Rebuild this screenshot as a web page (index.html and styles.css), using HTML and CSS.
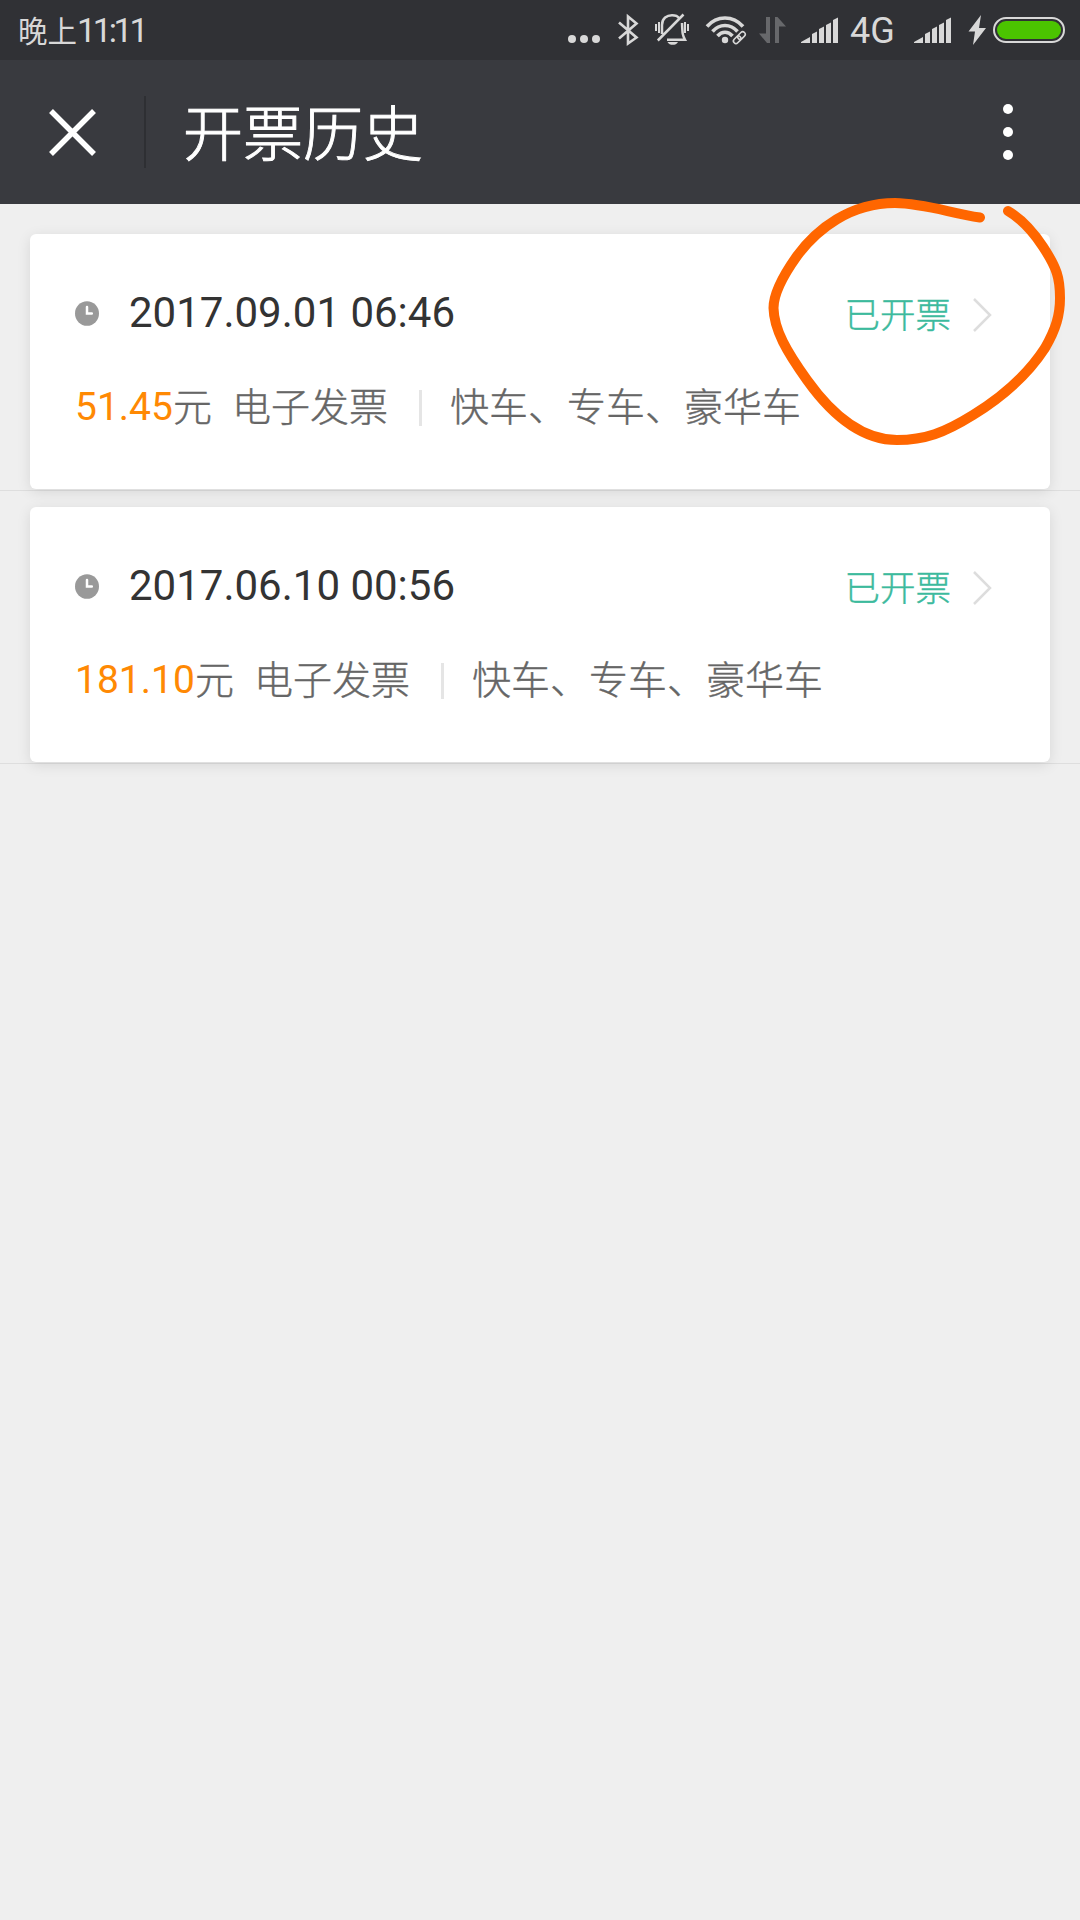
FILE: index.html
```html
<!DOCTYPE html>
<html lang="zh-CN">
<head>
<meta charset="utf-8">
<title>开票历史</title>
<link rel="stylesheet" href="styles.css">
</head>
<body>
<div class="screen">
  <header class="status-bar">
    <div class="clock">晚上<span class="clock-digits">11:11</span></div>
    <div class="status-icons">
      <svg class="i-more" width="32" height="60" viewBox="568 0 32 60"><circle cx="572" cy="39" r="4"/><circle cx="584" cy="39" r="4"/><circle cx="596" cy="39" r="4"/></svg>
      <svg class="i-bluetooth line" width="22" height="60" viewBox="617 0 22 60"><path d="M619 22.500 L636.500 37.500 L628 43.500 V16.500 L636.500 23.500 L619 38.500" stroke-width="2.600"/></svg>
      <svg class="i-bell line" width="36" height="60" viewBox="654 0 36 60"><path d="M662 34 V25 C662 18 667 15.200 672 15.200 C676 15.200 678 16.500 679 18 M682 23 C682.500 34 682.500 35 685 39.800 H667 M657.800 40.500 L683.500 14.500" stroke-width="2.500"/><path d="M656 24 V31 M659 22 V33 M685 22 V33 M688 24 V31" stroke-width="2"/><path class="solid" d="M667.500 42 H678 C676 45.800 669.500 45.800 667.500 42Z"/></svg>
      <svg class="i-wifi line" width="42" height="60" viewBox="705 0 42 60"><path d="M707 26.500 C717 15.200 733 15.200 743 26.500 M712.500 31.500 C719.500 23.500 730.500 23.500 737.500 31.500 M717.500 36 C722 31 728 31 732.500 36" stroke-width="3.600"/><circle class="solid" cx="725" cy="40" r="3.200"/><g transform="rotate(-45 739.500 37.500)" stroke-width="1.600"><rect x="732" y="35" width="8.500" height="5" rx="2.500"/><rect x="738" y="35" width="8.500" height="5" rx="2.500"/></g></svg>
      <svg class="i-data" width="27" height="60" viewBox="759 0 27 60"><path d="M766 17 H770 V43 H767 L759 33.500 H766Z M775 17 H777.500 L786 26.500 H779 V43 H775Z"/></svg>
      <svg class="i-signal" width="37" height="60" viewBox="801 0 37 60"><path d="M801 43 V42 L810 37 V43Z M812 43 V34 L817 31.500 V43Z M819 43 V29 L824 26.500 V43Z M826 43 V25 L831 22.500 V43Z M833 43 V20 L838 17.500 V43Z"/></svg>
      <span class="network">4G</span>
      <svg class="i-signal-b" width="37" height="60" viewBox="801 0 37 60"><path d="M801 43 V42 L810 37 V43Z M812 43 V34 L817 31.500 V43Z M819 43 V29 L824 26.500 V43Z M826 43 V25 L831 22.500 V43Z M833 43 V20 L838 17.500 V43Z"/></svg>
      <svg class="i-bolt" width="18" height="60" viewBox="968 0 18 60"><path d="M981 15 L968.500 31.500 H975 L973 45 L986 28 H979Z"/></svg>
      <svg class="i-battery" width="72" height="60" viewBox="993 0 72 60"><rect class="shell" x="994" y="18" width="70" height="24" rx="12"/><rect class="charge" x="997" y="21" width="64" height="18" rx="9"/></svg>
    </div>
  </header>

  <nav class="title-bar">
    <svg class="close" width="48" height="48" viewBox="0 0 48 48"><path d="M2 3 L45 46 M45 3 L2 46"/></svg>
    <span class="title-divider"></span>
    <h1 class="title">开票历史</h1>
    <svg class="menu" width="10" height="56" viewBox="0 0 10 56"><circle cx="5" cy="5" r="5"/><circle cx="5" cy="28" r="5"/><circle cx="5" cy="51" r="5"/></svg>
  </nav>

  <main class="list">
    <div class="item">
      <section class="card">
        <div class="row row-top">
          <svg class="time-icon" width="24" height="25" viewBox="0 0 24 25"><ellipse cx="12" cy="12.500" rx="12" ry="12.300"/><path d="M12 6 V12.500 H16.800"/></svg>
          <time class="date">2017.09.01 06:46</time>
          <span class="state">已开票</span>
          <svg class="chevron" width="20" height="34" viewBox="0 0 20 34"><path d="M1 1 L17 17 L1 33"/></svg>
        </div>
        <div class="row row-detail">
          <span class="amount">51.45</span><span class="unit">元</span>
          <span class="kind">电子发票</span>
          <span class="separator"></span>
          <span class="services">快车、专车、豪华车</span>
        </div>
      </section>
    </div>
    <div class="item">
      <section class="card">
        <div class="row row-top">
          <svg class="time-icon" width="24" height="25" viewBox="0 0 24 25"><ellipse cx="12" cy="12.500" rx="12" ry="12.300"/><path d="M12 6 V12.500 H16.800"/></svg>
          <time class="date">2017.06.10 00:56</time>
          <span class="state">已开票</span>
          <svg class="chevron" width="20" height="34" viewBox="0 0 20 34"><path d="M1 1 L17 17 L1 33"/></svg>
        </div>
        <div class="row row-detail">
          <span class="amount">181.10</span><span class="unit">元</span>
          <span class="kind">电子发票</span>
          <span class="separator"></span>
          <span class="services">快车、专车、豪华车</span>
        </div>
      </section>
    </div>
  </main>

  <svg class="highlight" width="310" height="260" viewBox="760 190 310 260"><path d="M980 217.500 C950 213 925 203.500 895 203 C850 203 817 229 797 256 C782 277 773.500 295 773.500 308 C774 330 787 352 807 380 C832 415 862 440 897 440 C925 440 944 433 973 415 C1012 391 1032 368 1045 348 C1056 329 1060 315 1060 298 C1060 278 1057 268 1043 246.700 C1030 227 1020 218 1008 211"/></svg>
</div>
</body>
</html>
```
FILE: styles.css
```css
* { box-sizing: border-box; }

body {
  margin: 0;
  background: #efefef;
  font-family: Roboto, "Noto Sans CJK SC", sans-serif;
}

svg { display: block; flex: none; }

.screen {
  position: relative;
  width: 1080px;
  height: 1920px;
  overflow: hidden;
  background: #efefef;
}

/* System status bar */
.status-bar {
  display: flex;
  justify-content: space-between;
  height: 60px;
  padding: 0 15px 0 18px;
  background: #303135;
  color: #d8d8d8;
}

.clock {
  font-size: 29.5px;
  line-height: 60px;
  white-space: nowrap;
}

.clock-digits {
  font-size: 34px;
  letter-spacing: -3.3px;
}

.status-icons {
  display: flex;
  fill: #d8d8d8;
}

.line { fill: none; stroke: #d8d8d8; }
.solid { fill: #d8d8d8; stroke: none; }
.i-bluetooth { margin-left: 17px; }
.i-bell { margin-left: 15px; }
.i-wifi { margin-left: 15px; }
.i-data { margin-left: 12px; fill: #67686b; }
.i-signal { margin-left: 15px; }

.network {
  width: 46px;
  margin-left: 12px;
  font-size: 36px;
  line-height: 62px;
}

.i-signal-b { margin-left: 18px; }
.i-bolt { margin-left: 17px; }
.i-battery { margin-left: 7px; }
.shell { fill: none; stroke: #d8d8d8; stroke-width: 2; }
.charge { fill: #4bc400; }

/* Page title bar */
.title-bar {
  display: flex;
  align-items: center;
  height: 144px;
  padding: 0 67px 0 49px;
  background: #393a3f;
}

.close {
  fill: none;
  stroke: #fff;
  stroke-width: 5.5;
}

.title-divider {
  width: 2px;
  height: 72px;
  margin-left: 47px;
  background: #2e2f33;
}

.title {
  flex: 1;
  margin: 0 0 0 37px;
  padding-top: 8px;
  color: #fff;
  font-size: 60px;
  font-weight: 300;
  line-height: 84px;
  -webkit-text-stroke: 0.9px #fff;
}

.menu { fill: #fff; }

/* Invoice list */
.list { padding-top: 14px; }

.item {
  padding: 16px 30px 1px;
  border-bottom: 1px solid #dedede;
}

.card {
  height: 255px;
  padding: 47px 57px 0 45px;
  border-radius: 6px;
  background: #fff;
  box-shadow: 0 3px 14px rgba(0, 0, 0, 0.1);
}

.row {
  display: flex;
  align-items: center;
  white-space: nowrap;
}

.row-top { height: 64px; }

.time-icon { fill: #999; }

.time-icon path {
  fill: none;
  stroke: #fff;
  stroke-width: 2.5;
  stroke-linecap: round;
}

.date {
  flex: 1;
  margin-left: 30px;
  padding-bottom: 2px;
  color: #333;
  font-size: 42px;
}

.state {
  padding-bottom: 2px;
  color: #3cba9d;
  font-size: 35.5px;
  font-weight: 300;
  -webkit-text-stroke: 0.4px #3cba9d;
}

.chevron {
  margin: 4px 0 0 22px;
  fill: none;
  stroke: #ddd;
  stroke-width: 2.5;
}

.row-detail {
  height: 60px;
  margin-top: 31px;
  color: #666;
  font-size: 39px;
  font-weight: 300;
}

.unit,
.kind,
.services {
  padding-bottom: 4px;
  -webkit-text-stroke: 0.4px #666;
}

.amount {
  padding-top: 1px;
  color: #ff8903;
  font-weight: 400;
}

.kind { margin-left: 20px; }

.separator {
  width: 3px;
  height: 36px;
  margin: 4px 28px 0 31px;
  background: #e5e5e5;
}

/* Hand-drawn marker ring over the first record */
.highlight {
  position: absolute;
  left: 760px;
  top: 190px;
  fill: none;
  stroke: #ff6600;
  stroke-width: 10;
  stroke-linecap: round;
}
```
